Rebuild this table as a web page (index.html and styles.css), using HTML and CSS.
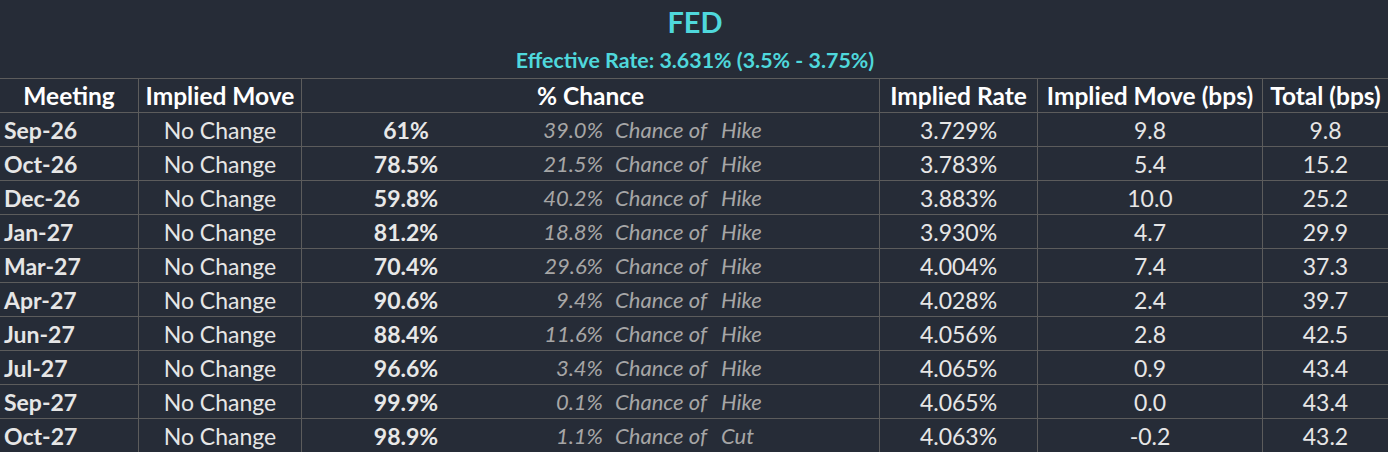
FILE: index.html
```html
<!DOCTYPE html>
<html lang="en">
<head>
<meta charset="utf-8">
<title>FED</title>
<link rel="stylesheet" href="styles.css">
</head>
<body>
<div class="sheet">
  <header class="title-block">
    <div class="title">FED</div>
    <div class="subtitle">Effective Rate: 3.631% (3.5% - 3.75%)</div>
  </header>
  <div class="table">
    <div class="row head">
      <div class="cell c-meet center">Meeting</div>
      <div class="cell">Implied Move</div>
      <div class="cell">% Chance</div>
      <div class="cell">Implied Rate</div>
      <div class="cell">Implied Move (bps)</div>
      <div class="cell">Total (bps)</div>
    </div>
    <div class="row">
      <div class="cell c-meet">Sep-26</div><div class="cell">No Change</div>
      <div class="cell chance"><span class="pct">61%</span><span class="alt">39.0%</span><span class="of">Chance of</span><span class="act">Hike</span></div>
      <div class="cell">3.729%</div><div class="cell">9.8</div><div class="cell">9.8</div>
    </div>
    <div class="row">
      <div class="cell c-meet">Oct-26</div><div class="cell">No Change</div>
      <div class="cell chance"><span class="pct">78.5%</span><span class="alt">21.5%</span><span class="of">Chance of</span><span class="act">Hike</span></div>
      <div class="cell">3.783%</div><div class="cell">5.4</div><div class="cell">15.2</div>
    </div>
    <div class="row">
      <div class="cell c-meet">Dec-26</div><div class="cell">No Change</div>
      <div class="cell chance"><span class="pct">59.8%</span><span class="alt">40.2%</span><span class="of">Chance of</span><span class="act">Hike</span></div>
      <div class="cell">3.883%</div><div class="cell">10.0</div><div class="cell">25.2</div>
    </div>
    <div class="row">
      <div class="cell c-meet">Jan-27</div><div class="cell">No Change</div>
      <div class="cell chance"><span class="pct">81.2%</span><span class="alt">18.8%</span><span class="of">Chance of</span><span class="act">Hike</span></div>
      <div class="cell">3.930%</div><div class="cell">4.7</div><div class="cell">29.9</div>
    </div>
    <div class="row">
      <div class="cell c-meet">Mar-27</div><div class="cell">No Change</div>
      <div class="cell chance"><span class="pct">70.4%</span><span class="alt">29.6%</span><span class="of">Chance of</span><span class="act">Hike</span></div>
      <div class="cell">4.004%</div><div class="cell">7.4</div><div class="cell">37.3</div>
    </div>
    <div class="row">
      <div class="cell c-meet">Apr-27</div><div class="cell">No Change</div>
      <div class="cell chance"><span class="pct">90.6%</span><span class="alt">9.4%</span><span class="of">Chance of</span><span class="act">Hike</span></div>
      <div class="cell">4.028%</div><div class="cell">2.4</div><div class="cell">39.7</div>
    </div>
    <div class="row">
      <div class="cell c-meet">Jun-27</div><div class="cell">No Change</div>
      <div class="cell chance"><span class="pct">88.4%</span><span class="alt">11.6%</span><span class="of">Chance of</span><span class="act">Hike</span></div>
      <div class="cell">4.056%</div><div class="cell">2.8</div><div class="cell">42.5</div>
    </div>
    <div class="row">
      <div class="cell c-meet">Jul-27</div><div class="cell">No Change</div>
      <div class="cell chance"><span class="pct">96.6%</span><span class="alt">3.4%</span><span class="of">Chance of</span><span class="act">Hike</span></div>
      <div class="cell">4.065%</div><div class="cell">0.9</div><div class="cell">43.4</div>
    </div>
    <div class="row">
      <div class="cell c-meet">Sep-27</div><div class="cell">No Change</div>
      <div class="cell chance"><span class="pct">99.9%</span><span class="alt">0.1%</span><span class="of">Chance of</span><span class="act">Hike</span></div>
      <div class="cell">4.065%</div><div class="cell">0.0</div><div class="cell">43.4</div>
    </div>
    <div class="row">
      <div class="cell c-meet">Oct-27</div><div class="cell">No Change</div>
      <div class="cell chance"><span class="pct">98.9%</span><span class="alt">1.1%</span><span class="of">Chance of</span><span class="act">Cut</span></div>
      <div class="cell">4.063%</div><div class="cell">-0.2</div><div class="cell">43.2</div>
    </div>
  </div>
</div>
</body>
</html>
```

FILE: styles.css
```css
html, body {
  margin: 0;
  padding: 0;
  background: #262c37;
}

.sheet {
  width: 1388px;
  height: 452px;
  overflow: hidden;
  background: #262c37;
  font-family: Lato, "Liberation Sans", sans-serif;
  color: #e6e6e6;
}

.title-block {
  height: 78px;
  display: flex;
  flex-direction: column;
  align-items: center;
}

.title {
  color: #4fd8dc;
  font-weight: 700;
  font-size: 29px;
  line-height: 34px;
  margin-top: 5px;
  padding-left: 2px;
}

.subtitle {
  color: #4fd8dc;
  font-weight: 700;
  font-size: 21.4px;
  line-height: 26px;
  margin-top: 8px;
  padding-left: 2px;
}

.row {
  display: grid;
  grid-template-columns: 138px 163px 578px 158px 225px 126px;
  height: 34px;
  box-sizing: border-box;
  border-top: 1px solid #5c5c5c;
}

.cell {
  box-sizing: border-box;
  border-left: 1px solid #5c5c5c;
  font-size: 23px;
  line-height: 34px;
  height: 33px;
  text-align: center;
  white-space: nowrap;
  overflow: hidden;
}

.cell.c-meet {
  border-left: none;
  text-align: left;
  padding-left: 4px;
  font-weight: 700;
}

.cell.c-meet.center {
  text-align: center;
  padding-left: 0;
}

.head .cell {
  font-weight: 700;
  color: #ffffff;
  font-size: 24.5px;
}

.chance {
  display: flex;
  text-align: left;
}

.chance .pct {
  width: 208px;
  text-align: center;
  font-weight: 700;
  color: #e8e8e8;
}

.chance .alt {
  width: 93px;
  text-align: right;
  font-style: italic;
  font-size: 22px;
  color: #a6a6a6;
}

.chance .of {
  width: 106px;
  margin-left: 12px;
  font-style: italic;
  font-size: 22px;
  color: #a6a6a6;
}

.chance .act {
  font-style: italic;
  font-size: 22px;
  color: #a6a6a6;
}
```
